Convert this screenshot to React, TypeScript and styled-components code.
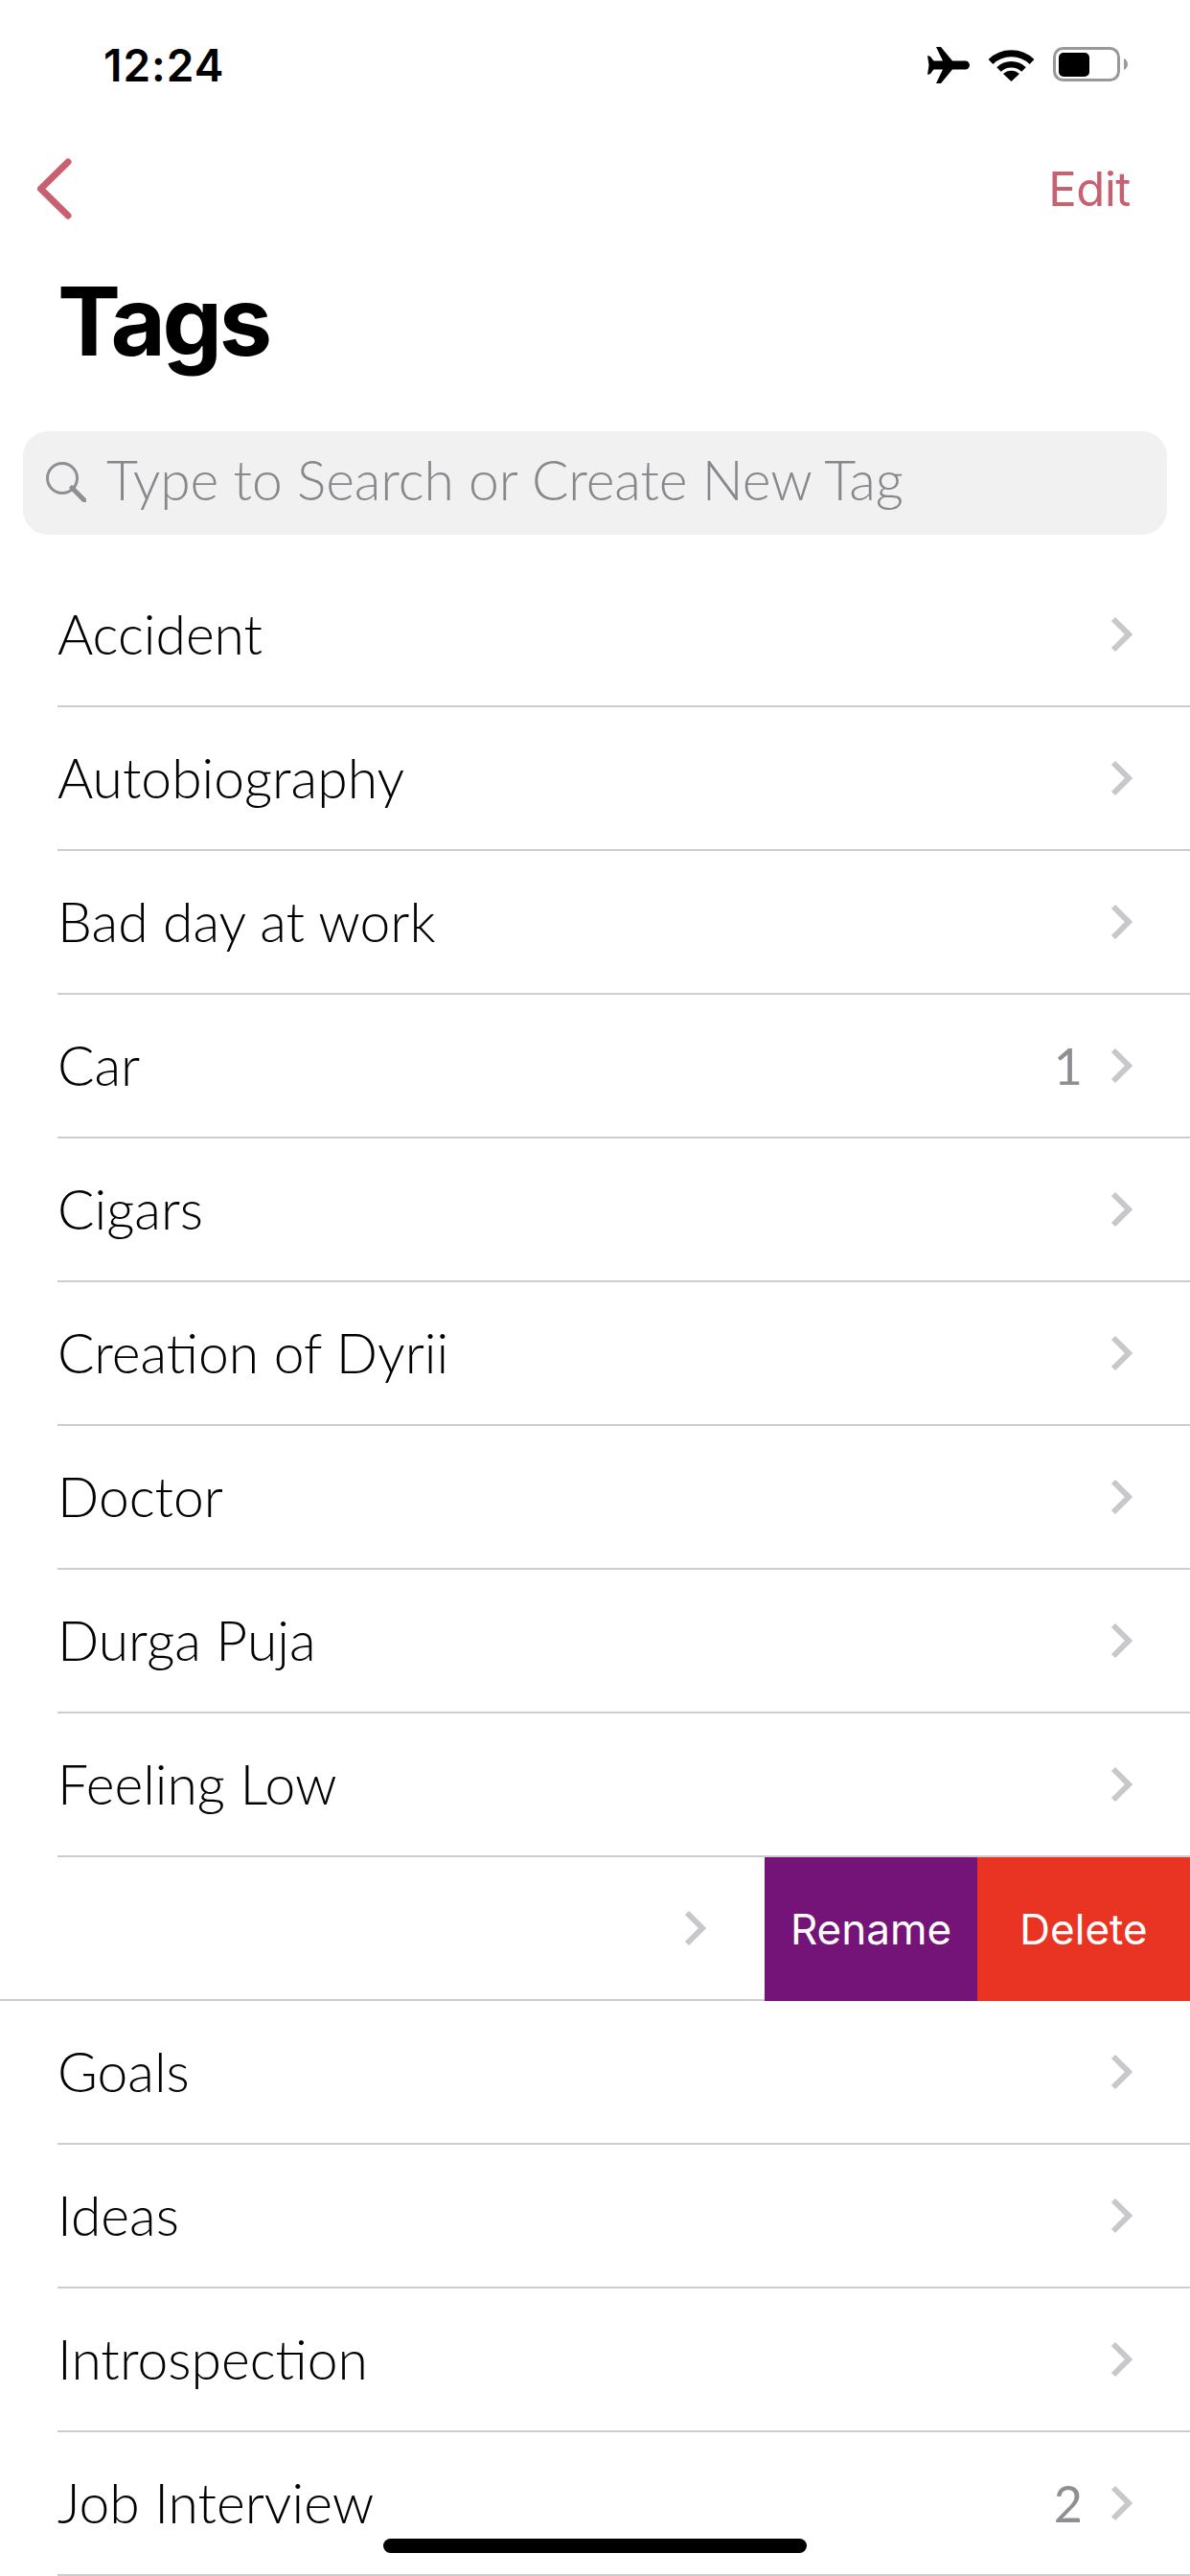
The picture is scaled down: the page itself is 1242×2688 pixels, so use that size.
import React from 'react';
import styled, { createGlobalStyle } from 'styled-components';

const GlobalStyle = createGlobalStyle`
  html, body {
    margin: 0;
    padding: 0;
    background: #fff;
  }
  * {
    box-sizing: border-box;
  }
`;

const Screen = styled.div`
  position: relative;
  width: 1242px;
  height: 2688px;
  overflow: hidden;
  background: #fff;
  color: #000;
  font-family: 'Lato', 'Noto Sans', sans-serif;
`;

const StatusBar = styled.div`
  display: flex;
  align-items: flex-start;
  justify-content: space-between;
  height: 136px;
  padding: 42px 65px 0 108px;
`;

const Clock = styled.span`
  font-family: 'Inter', sans-serif;
  font-size: 46px;
  font-weight: 600;
  line-height: 52px;
  letter-spacing: 1px;
`;

const StatusIcons = styled.div`
  display: flex;
  align-items: flex-start;
  gap: 19px;
  margin-top: 7px;
`;

const NavBar = styled.div`
  display: flex;
  align-items: center;
  justify-content: space-between;
  height: 122px;
  padding: 0 62px 0 38px;
`;

const EditLink = styled.span`
  font-family: 'Inter', sans-serif;
  font-size: 49px;
  font-weight: 400;
  color: #c9606f;
  letter-spacing: -0.4px;
`;

const Title = styled.h1`
  margin: 41px 0 0;
  padding-left: 60px;
  height: 72px;
  font-family: 'Inter', sans-serif;
  font-size: 99px;
  font-weight: 700;
  line-height: 72px;
  letter-spacing: -3.4px;
`;

const SearchBox = styled.div`
  display: flex;
  align-items: center;
  gap: 21px;
  height: 108px;
  margin: 79px 24px 30px 24px;
  padding: 0 0 3px 24px;
  border-radius: 26px;
  background: #f1f1f2;
  color: #87878c;
  font-size: 57px;
  font-weight: 300;
  letter-spacing: -0.1px;
`;

const Placeholder = styled.span`
  margin-bottom: 5px;
`;

const TagList = styled.div`
  display: flex;
  flex-direction: column;
`;

const TagRow = styled.div`
  display: flex;
  height: 150px;
  padding-left: 60px;
`;

const RowBody = styled.div`
  flex: 1;
  display: flex;
  align-items: center;
  justify-content: space-between;
  padding-right: 60px;
  border-bottom: 2px solid #cdcdd0;
`;

const TagName = styled.span`
  margin-bottom: 3px;
  font-size: 57px;
  font-weight: 300;
`;

const Trailing = styled.div`
  display: flex;
  align-items: center;
  gap: 29px;
`;

const Count = styled.span`
  font-size: 52px;
  font-weight: 400;
  color: #8e8e93;
`;

const SwipedRow = styled.div`
  display: flex;
  height: 150px;
`;

const SwipedBody = styled.div`
  flex: 1;
  display: flex;
  align-items: center;
  justify-content: flex-end;
  padding-right: 61px;
  border-bottom: 2px solid #cdcdd0;
`;

const ActionButton = styled.div<{ $bg: string }>`
  display: flex;
  align-items: center;
  justify-content: center;
  width: 222px;
  background: ${props => props.$bg};
  color: #fff;
  font-family: 'Inter', sans-serif;
  font-size: 44px;
  font-weight: 400;
`;

const HomeIndicator = styled.div`
  position: absolute;
  left: 400px;
  top: 2649px;
  width: 442px;
  height: 15px;
  border-radius: 8px;
  background: #000;
`;

const Airplane = () => (
  <svg width="44" height="38" viewBox="0 0 44 38">
    <path
      fill="#000"
      d="M44 19c0-2.500-2-4.500-4.500-4.500H26L14 0H9l7 14.500H6.500L3 10 0 9l1.500 10L0 29l3-1 3.500-4.500H16L9 38h5l12-14.500h13.500c2.500 0 4.500-2 4.500-4.500z"
    />
  </svg>
);

const Wifi = () => (
  <svg width="49" height="36" viewBox="0 0 49 36">
    <g fill="none" stroke="#000">
      <path strokeWidth="7" d="M3 15.500A31 31 0 0 1 46 15.500" />
      <path strokeWidth="6.500" d="M11.500 23.500A19 19 0 0 1 37.500 23.500" />
    </g>
    <path fill="#000" d="M24.500 36L16 28a12.500 12.500 0 0 1 17 0z" />
  </svg>
);

const Battery = () => (
  <svg width="78" height="36" viewBox="0 0 78 36">
    <rect x="1.500" y="1.500" width="67" height="33" rx="9" fill="none" stroke="#999" strokeWidth="3" />
    <rect x="6" y="6" width="32" height="25" rx="5" fill="#000" />
    <path fill="#999" d="M74 12c2.500 1 4 3.500 4 6s-1.500 5-4 6z" />
  </svg>
);

const BackChevron = () => (
  <svg width="38" height="64" viewBox="0 0 38 64">
    <path d="M33 4L4.500 32L33 60" fill="none" stroke="#c9606f" strokeWidth="7" strokeLinecap="round" strokeLinejoin="round" />
  </svg>
);

const SearchIcon = () => (
  <svg width="42" height="42" viewBox="0 0 42 42">
    <circle cx="17" cy="17" r="15.500" fill="none" stroke="#8e8e93" strokeWidth="3" />
    <path d="M27 27l13 13" fill="none" stroke="#8e8e93" strokeWidth="5" strokeLinecap="round" />
  </svg>
);

const Chevron = () => (
  <svg width="23" height="38" viewBox="0 0 23 38">
    <path d="M3 3L19 19L3 35" fill="none" stroke="#c7c7cc" strokeWidth="6" />
  </svg>
);

const beforeSwipe = [
  { name: 'Accident' },
  { name: 'Autobiography' },
  { name: 'Bad day at work' },
  { name: 'Car', count: 1 },
  { name: 'Cigars' },
  { name: 'Creation of Dyrii' },
  { name: 'Doctor' },
  { name: 'Durga Puja' },
  { name: 'Feeling Low' },
];

const afterSwipe = [
  { name: 'Goals' },
  { name: 'Ideas' },
  { name: 'Introspection' },
  { name: 'Job Interview', count: 2 },
];

const renderRow = (tag: { name: string; count?: number }) => (
  <TagRow key={tag.name}>
    <RowBody>
      <TagName>{tag.name}</TagName>
      <Trailing>
        {tag.count !== undefined && <Count>{tag.count}</Count>}
        <Chevron />
      </Trailing>
    </RowBody>
  </TagRow>
);

const App: React.FC = () => {
  return (
    <Screen>
      <GlobalStyle />
      <StatusBar>
        <Clock>12:24</Clock>
        <StatusIcons>
          <Airplane />
          <Wifi />
          <Battery />
        </StatusIcons>
      </StatusBar>
      <NavBar>
        <BackChevron />
        <EditLink>Edit</EditLink>
      </NavBar>
      <Title>Tags</Title>
      <SearchBox>
        <SearchIcon />
        <Placeholder>Type to Search or Create New Tag</Placeholder>
      </SearchBox>
      <TagList>
        {beforeSwipe.map(renderRow)}
        <SwipedRow>
          <SwipedBody>
            <Chevron />
          </SwipedBody>
          <ActionButton $bg="#741478">Rename</ActionButton>
          <ActionButton $bg="#e93423">Delete</ActionButton>
        </SwipedRow>
        {afterSwipe.map(renderRow)}
      </TagList>
      <HomeIndicator />
    </Screen>
  );
};

export default App;
